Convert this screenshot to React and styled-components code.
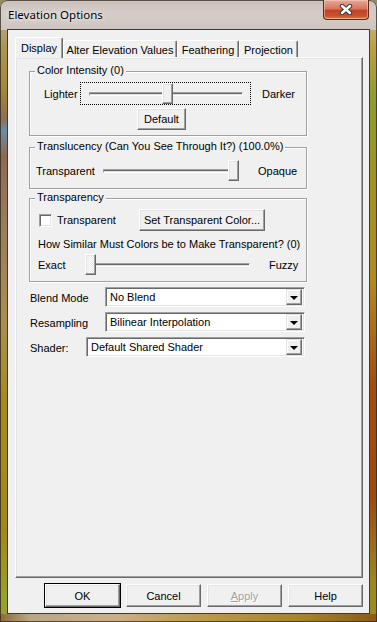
import styled, { createGlobalStyle } from "styled-components";

const GlobalStyle = createGlobalStyle`
  html, body {
    margin: 0;
    padding: 0;
  }
  body {
    width: 377px;
    height: 622px;
    overflow: hidden;
    background: #9a8a60;
    font-family: "Liberation Sans", Arial, sans-serif;
    font-size: 11px;
    color: #000;
  }
`;

const Window = styled.div`
  width: 377px;
  height: 622px;
  box-sizing: border-box;
  display: flex;
  flex-direction: column;
  border-radius: 7px 7px 0 0;
  box-shadow: inset 0 0 0 1px rgba(50, 40, 30, 0.75);
  background:
    linear-gradient(180deg, #cbc0bb 0%, #d5ccc8 45%, #cfc5c0 100%) top / 100% 30px no-repeat,
    linear-gradient(90deg, #8a6a3a 0%, #b8a888 8%, #c9b08a 30%, #b89a48 55%, #a8842a 80%, #8a5a1a 100%) bottom / 100% 8px no-repeat,
    linear-gradient(180deg, #c2b6ae 0%, #a99455 8%, #a18a3c 14%, #8f7050 19%, #6f8ba8 21%, #8c6a52 25%, #977c5c 35%, #a89050 52%, #a48a22 65%, #a08820 85%, #98a030 96%) left / 8px 100% no-repeat,
    linear-gradient(180deg, #cbbcb0 0%, #b8a040 8%, #8d9c2e 16%, #a0921e 30%, #b08a20 45%, #a24c10 62%, #9c4a12 80%, #9a8a22 94%) right / 8px 100% no-repeat,
    #b0a070;
`;

const TitleBar = styled.div`
  height: 29px;
  flex: none;
  display: flex;
  align-items: flex-start;
  padding: 0 8px;
`;

const Title = styled.div`
  font-family: "Noto Sans", "Liberation Sans", sans-serif;
  font-size: 11.5px;
  line-height: 16px;
  padding-top: 7px;
  color: #000;
  text-shadow: 0 0 6px rgba(255, 255, 255, 0.9), 0 0 3px rgba(255, 255, 255, 0.8);
`;

const CloseButton = styled.div`
  margin-left: auto;
  width: 46px;
  height: 20px;
  box-sizing: border-box;
  display: flex;
  align-items: center;
  justify-content: center;
  border: 1px solid #5e2a1e;
  border-top: none;
  border-radius: 0 0 4px 4px;
  background: linear-gradient(180deg, #e7a99a 0%, #d8765e 45%, #c2432a 55%, #c8532e 85%, #dd8a5a 100%);
  box-shadow: inset 0 0 0 1px rgba(255, 220, 200, 0.45);
`;

const Client = styled.div`
  flex: 1;
  margin: 0 7px 8px 7px;
  border: 1px solid #3e3a2e;
  background: #f0f0f0;
  display: flex;
  flex-direction: column;
  padding: 7px 6px 6px 7px;
  min-height: 0;
`;

const TabStrip = styled.div`
  display: flex;
  align-items: flex-end;
  height: 20px;
  position: relative;
  z-index: 1;
`;

const Tab = styled.div`
  width: ${(p) => p.$w}px;
  height: ${(p) => (p.$active ? 21 : 17)}px;
  margin-bottom: ${(p) => (p.$active ? -1 : 0)}px;
  box-sizing: border-box;
  display: flex;
  align-items: center;
  justify-content: center;
  padding-top: ${(p) => (p.$active ? 0 : 1)}px;
  background: #f0f0f0;
  border-top: 1px solid #fff;
  border-left: 1px solid #fff;
  border-right: 1px solid #696969;
  border-radius: 2px 2px 0 0;
  box-shadow: inset -1px 0 0 #a0a0a0;
  white-space: nowrap;
`;

const Panel = styled.div`
  flex: 1;
  display: flex;
  flex-direction: column;
  border-top: 1px solid #fff;
  border-left: 1px solid #fff;
  border-right: 1px solid #696969;
  border-bottom: 1px solid #696969;
  box-shadow: inset -1px -1px 0 #a0a0a0, inset 1px 1px 0 #e3e3e3;
  padding: 0 0 0 13px;
`;

const GroupBox = styled.section`
  width: 278px;
  box-sizing: border-box;
  margin-top: ${(p) => p.$mt}px;
  border: 1px solid #a0a0a0;
  box-shadow: 1px 1px 0 #fff, inset 1px 1px 0 #fff;
  padding: 0 0 ${(p) => p.$pb}px ${(p) => p.$pl}px;
`;

const GroupTitle = styled.div`
  width: fit-content;
  margin: -8px 0 0 ${(p) => 5 - p.$pl}px;
  padding: 0 2px;
  line-height: 13px;
  height: 13px;
  background: #f0f0f0;
  white-space: nowrap;
`;

const IntensityGrid = styled.div`
  display: grid;
  grid-template-columns: 36px 171px auto;
  row-gap: 3px;
  align-items: center;
  margin-top: 5px;
`;

const FocusBox = styled.div`
  height: 23px;
  box-sizing: border-box;
  border: 1px dotted #000;
  padding: 0 8px;
  display: flex;
  align-items: center;
`;

const SideLabel = styled.span`
  padding-left: ${(p) => p.$pl || 0}px;
  width: ${(p) => (p.$w ? `${p.$w}px` : "auto")};
  flex: none;
  white-space: nowrap;
`;

const SliderWrap = styled.div`
  position: relative;
  width: ${(p) => p.$w}px;
  height: 21px;
  flex: none;
  display: flex;
  align-items: center;
`;

const Track = styled.div`
  width: 100%;
  height: 4px;
  box-sizing: border-box;
  border-top: 1px solid #a0a0a0;
  border-left: 1px solid #a0a0a0;
  border-bottom: 1px solid #fff;
  border-right: 1px solid #fff;
  background: #e3e3e3;
  box-shadow: inset 0 1px 0 #696969;
`;

const Thumb = styled.div`
  position: absolute;
  top: 0;
  left: ${(p) => p.$left}px;
  width: 11px;
  height: 21px;
  box-sizing: border-box;
  border-top: 1px solid #fff;
  border-left: 1px solid #fff;
  border-right: 1px solid #696969;
  border-bottom: 1px solid #696969;
  box-shadow: inset -1px -1px 0 #a0a0a0, inset 1px 1px 0 #e3e3e3;
  background: ${(p) =>
    p.$focus
      ? "repeating-conic-gradient(#ffffff 0 25%, #e6e6e6 0 50%) 0 0 / 2px 2px"
      : "#f0f0f0"};
`;

const Button = styled.div`
  width: ${(p) => p.$w}px;
  height: ${(p) => p.$h || 22}px;
  margin-left: ${(p) => p.$ml || 0}px;
  box-sizing: border-box;
  display: flex;
  align-items: center;
  justify-content: center;
  background: #f0f0f0;
  border-top: 1px solid #fff;
  border-left: 1px solid #fff;
  border-right: 1px solid #696969;
  border-bottom: 1px solid #696969;
  box-shadow: inset -1px -1px 0 #a0a0a0, inset 1px 1px 0 #e3e3e3
    ${(p) => (p.$default ? ", 0 0 0 1px #000" : "")};
  color: ${(p) => (p.$disabled ? "#a0a0a0" : "#000")};
  text-shadow: ${(p) => (p.$disabled ? "1px 1px 0 #fff" : "none")};
  white-space: nowrap;
  flex: none;
`;

const Row = styled.div`
  display: flex;
  align-items: center;
  margin-top: ${(p) => p.$mt || 0}px;
  height: ${(p) => (p.$h ? `${p.$h}px` : "auto")};
`;

const CheckBox = styled.div`
  width: 13px;
  height: 13px;
  box-sizing: border-box;
  margin-left: 1px;
  background: #fff;
  border-top: 1px solid #a0a0a0;
  border-left: 1px solid #a0a0a0;
  border-right: 1px solid #fff;
  border-bottom: 1px solid #fff;
  box-shadow: inset 1px 1px 0 #696969, inset -1px -1px 0 #e3e3e3;
  flex: none;
`;

const Fields = styled.div`
  display: flex;
  flex-direction: column;
  gap: 5px;
  margin-top: 5px;
  padding-left: 1px;
`;

const FieldLabel = styled.span`
  width: ${(p) => p.$w}px;
  flex: none;
  white-space: nowrap;
  padding-top: 1px;
`;

const Select = styled.div`
  width: ${(p) => p.$w}px;
  height: 20px;
  box-sizing: border-box;
  display: flex;
  align-items: center;
  background: #fff;
  border-top: 1px solid #a0a0a0;
  border-left: 1px solid #a0a0a0;
  border-right: 1px solid #fff;
  border-bottom: 1px solid #fff;
  box-shadow: inset 1px 1px 0 #696969, inset -1px -1px 0 #e3e3e3;
  padding: 2px 2px 2px 4px;
`;

const SelectText = styled.span`
  flex: 1;
  white-space: nowrap;
`;

const DropButton = styled.div`
  width: 16px;
  height: 16px;
  box-sizing: border-box;
  display: flex;
  align-items: center;
  justify-content: center;
  background: #f0f0f0;
  border-top: 1px solid #e3e3e3;
  border-left: 1px solid #e3e3e3;
  border-right: 1px solid #696969;
  border-bottom: 1px solid #696969;
  box-shadow: inset -1px -1px 0 #a0a0a0, inset 1px 1px 0 #fff;
`;

const Arrow = styled.div`
  width: 0;
  height: 0;
  border-left: 4px solid transparent;
  border-right: 4px solid transparent;
  border-top: 4px solid #000;
  margin-top: 1px;
`;

const ButtonRow = styled.div`
  display: flex;
  justify-content: flex-end;
  gap: 6px;
  margin-top: 6px;
  height: 23px;
`;

function Slider({ width, value, focus }) {
  const left = Math.round(value * (width - 11));
  return (
    <SliderWrap $w={width}>
      <Track />
      <Thumb $left={left} $focus={focus} />
    </SliderWrap>
  );
}

function Group({ title, mt, pl, pb, children }) {
  return (
    <GroupBox $mt={mt} $pl={pl} $pb={pb}>
      <GroupTitle $pl={pl}>{title}</GroupTitle>
      {children}
    </GroupBox>
  );
}

function ComboBox({ width, text }) {
  return (
    <Select $w={width}>
      <SelectText>{text}</SelectText>
      <DropButton>
        <Arrow />
      </DropButton>
    </Select>
  );
}

export default function App() {
  const tabs = [
    { name: "Display", w: 48, active: true },
    { name: "Alter Elevation Values", w: 114 },
    { name: "Feathering", w: 62 },
    { name: "Projection", w: 59 },
  ];

  return (
    <>
      <GlobalStyle />
      <Window>
        <TitleBar>
          <Title>Elevation Options</Title>
          <CloseButton>
            <svg width="14" height="11" viewBox="0 0 14 11">
              <path d="M3 2 L11 9 M11 2 L3 9" stroke="#3b3b3b" strokeWidth="4.4" strokeLinecap="round" />
              <path d="M3 2 L11 9 M11 2 L3 9" stroke="#ffffff" strokeWidth="2.4" strokeLinecap="round" />
            </svg>
          </CloseButton>
        </TitleBar>

        <Client>
          <TabStrip>
            {tabs.map((t) => (
              <Tab key={t.name} $w={t.w} $active={t.active}>
                {t.name}
              </Tab>
            ))}
          </TabStrip>

          <Panel>
            <Group title="Color Intensity (0)" mt={13} pl={14} pb={5}>
              <IntensityGrid>
                <SideLabel>Lighter</SideLabel>
                <FocusBox>
                  <Slider width={154} value={0.51} />
                </FocusBox>
                <SideLabel $pl={11}>Darker</SideLabel>
                <span />
                <Button $w={49} $ml={57}>
                  Default
                </Button>
              </IntensityGrid>
            </Group>

            <Group title="Translucency (Can You See Through It?) (100.0%)" mt={11} pl={6} pb={7}>
              <Row $mt={7}>
                <SideLabel $w={67}>Transparent</SideLabel>
                <Slider width={136} value={1} />
                <SideLabel $pl={19}>Opaque</SideLabel>
              </Row>
            </Group>

            <Group title="Transparency" mt={9} pl={8} pb={6}>
              <Row $mt={5} $h={22}>
                <CheckBox />
                <SideLabel $pl={5} $w={82}>
                  Transparent
                </SideLabel>
                <Button $w={126}>Set Transparent Color...</Button>
              </Row>
              <Row $mt={6} $h={13}>
                How Similar Must Colors be to Make Transparent? (0)
              </Row>
              <Row $mt={4}>
                <SideLabel $w={47}>Exact</SideLabel>
                <Slider width={165} value={0} focus />
                <SideLabel $pl={19}>Fuzzy</SideLabel>
              </Row>
            </Group>

            <Fields>
              <Row>
                <FieldLabel $w={75}>Blend Mode</FieldLabel>
                <ComboBox width={200} text="No Blend" />
              </Row>
              <Row>
                <FieldLabel $w={75}>Resampling</FieldLabel>
                <ComboBox width={200} text="Bilinear Interpolation" />
              </Row>
              <Row>
                <FieldLabel $w={56}>Shader:</FieldLabel>
                <ComboBox width={219} text="Default Shared Shader" />
              </Row>
            </Fields>
          </Panel>

          <ButtonRow>
            <Button $w={75} $h={23} $default>
              OK
            </Button>
            <Button $w={75} $h={23}>
              Cancel
            </Button>
            <Button $w={75} $h={23} $disabled>
              <span>
                <u>A</u>pply
              </span>
            </Button>
            <Button $w={75} $h={23}>
              Help
            </Button>
          </ButtonRow>
        </Client>
      </Window>
    </>
  );
}
